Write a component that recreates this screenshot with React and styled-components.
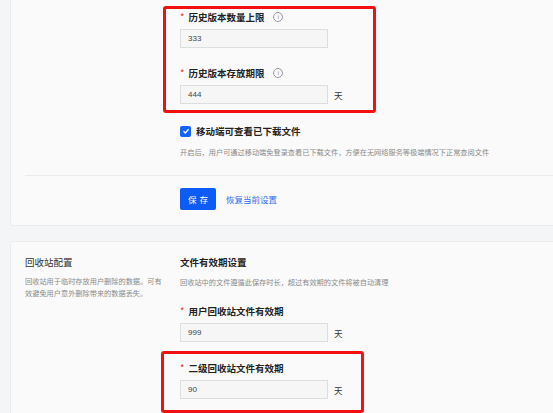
import React from 'react';
import styled, { createGlobalStyle } from 'styled-components';

const Global = createGlobalStyle`
  html, body { margin: 0; background: #f4f5f7; overflow: hidden; }
  body { font-family: "Noto Sans CJK SC", "Noto Sans", sans-serif; color: #222; }
`;

const Page = styled.div`
  width: 620px;
  padding-left: 10px;
  display: flex;
  flex-direction: column;
  gap: 15px;
`;

const Card = styled.div`
  background: #fafafa;
  border: 1px solid #ececec;
  border-radius: 4px;
  padding: ${p => p.$pad};
`;

const Columns = styled.div`
  display: flex;
  padding-left: 14px;
`;

const Side = styled.div`
  width: 155px;
  flex-shrink: 0;
`;

const Main = styled.div`
  display: flex;
  flex-direction: column;
`;

const SideTitle = styled.div`
  font-size: 9.5px;
  line-height: 12px;
  color: #333;
`;

const Desc = styled.div`
  font-size: 7.2px;
  line-height: 12px;
  color: #8a8a8a;
  margin-top: ${p => p.$mt || 0}px;
  max-width: ${p => p.$w || 'none'};
`;

const Title = styled.div`
  font-size: 9.5px;
  line-height: 12px;
  font-weight: 700;
  color: #222;
`;

const Highlight = styled.div`
  border: 3px solid #f21010;
  border-radius: 3px;
  margin-left: ${p => -p.$ml}px;
  padding: ${p => p.$pad};
  width: ${p => p.$w}px;
  box-sizing: border-box;
  display: flex;
  flex-direction: column;
  gap: 19px;
`;

const Field = styled.div`
  display: flex;
  flex-direction: column;
  gap: 6px;
  margin-top: ${p => p.$mt || 0}px;
`;

const Label = styled.div`
  display: flex;
  align-items: center;
  font-size: 9.5px;
  line-height: 12px;
  font-weight: 700;
  color: #222;
  &::before {
    content: '*';
    color: #e5322d;
    font-weight: 400;
    margin-right: 4px;
  }
`;

const Info = styled.span`
  display: inline-flex;
  align-items: center;
  justify-content: center;
  width: 8px;
  height: 8px;
  border: 1px solid #999;
  border-radius: 50%;
  margin-left: 9px;
  font-size: 6px;
  font-style: italic;
  font-family: "Liberation Serif", serif;
  color: #888;
  font-weight: 400;
`;

const InputRow = styled.div`
  display: flex;
  align-items: center;
  gap: 6px;
`;

const Input = styled.div`
  width: 148px;
  height: 19px;
  box-sizing: border-box;
  border: 1px solid #dedede;
  background: #f6f6f6;
  font-size: 8px;
  color: #444;
  padding-left: 7px;
  display: flex;
  align-items: center;
  font-family: "Liberation Sans", sans-serif;
`;

const Unit = styled.span`
  font-size: 8.5px;
  color: #333;
`;

const CheckRow = styled.div`
  display: flex;
  align-items: center;
  gap: 5px;
  margin-top: 11px;
  font-size: 9.5px;
  font-weight: 700;
`;

const Box = styled.span`
  width: 11px;
  height: 11px;
  border-radius: 2px;
  background: #1463ff;
  display: inline-flex;
  align-items: center;
  justify-content: center;
`;

const Divider = styled.div`
  height: 1px;
  background: #ebebeb;
  margin: 17px 0 12px 14px;
`;

const Actions = styled.div`
  display: flex;
  align-items: center;
  gap: 10px;
  padding-left: 169px;
`;

const Button = styled.button`
  width: 36px;
  height: 22px;
  border: none;
  border-radius: 2px;
  background: #0d5cf5;
  color: #fff;
  font-size: 8.5px;
  letter-spacing: 3px;
  text-indent: 3px;
  font-family: inherit;
  padding: 0;
`;

const LinkText = styled.span`
  font-size: 8.5px;
  color: #2f6ef0;
`;

export default function App() {
  return (
    <>
      <Global />
      <Page>
        <Card $pad="0 0 15px 0" style={{ borderTop: 'none', borderRadius: '0 0 4px 4px' }}>
          <Columns>
            <Side />
            <Main>
              <Highlight $ml={17} $w={213} $pad="2px 0 6px 14px" style={{ marginTop: 6 }}>
                <Field>
                  <Label>历史版本数量上限<Info>i</Info></Label>
                  <InputRow><Input>333</Input></InputRow>
                </Field>
                <Field>
                  <Label>历史版本存放期限<Info>i</Info></Label>
                  <InputRow><Input>444</Input><Unit>天</Unit></InputRow>
                </Field>
              </Highlight>
              <CheckRow>
                <Box>
                  <svg width="8" height="8" viewBox="0 0 8 8">
                    <path d="M1.5 4.2 L3.3 6 L6.6 2.3" stroke="#fff" strokeWidth="1.3" fill="none" />
                  </svg>
                </Box>
                移动端可查看已下载文件
              </CheckRow>
              <Desc $mt={8}>开启后，用户可通过移动端免登录查看已下载文件，方便在无网络服务等极端情况下正常查阅文件</Desc>
            </Main>
          </Columns>
          <Divider />
          <Actions>
            <Button>保存</Button>
            <LinkText>恢复当前设置</LinkText>
          </Actions>
        </Card>
        <Card $pad="14px 0 0 0" style={{ borderBottom: 'none', height: 200 }}>
          <Columns>
            <Side>
              <SideTitle>回收站配置</SideTitle>
              <Desc $mt={7} $w="140px">回收站用于临时存放用户删除的数据。可有效避免用户意外删除带来的数据丢失。</Desc>
            </Side>
            <Main>
              <Title>文件有效期设置</Title>
              <Desc $mt={8}>回收站中的文件遵循此保存时长，超过有效期的文件将被自动清理</Desc>
              <Field $mt={17}>
                <Label>用户回收站文件有效期</Label>
                <InputRow><Input>999</Input><Unit>天</Unit></InputRow>
              </Field>
              <Highlight $ml={19} $w={203} $pad="8px 0 11px 16px" style={{ marginTop: 9 }}>
                <Field>
                  <Label>二级回收站文件有效期</Label>
                  <InputRow><Input>90</Input><Unit>天</Unit></InputRow>
                </Field>
              </Highlight>
            </Main>
          </Columns>
        </Card>
      </Page>
    </>
  );
}
